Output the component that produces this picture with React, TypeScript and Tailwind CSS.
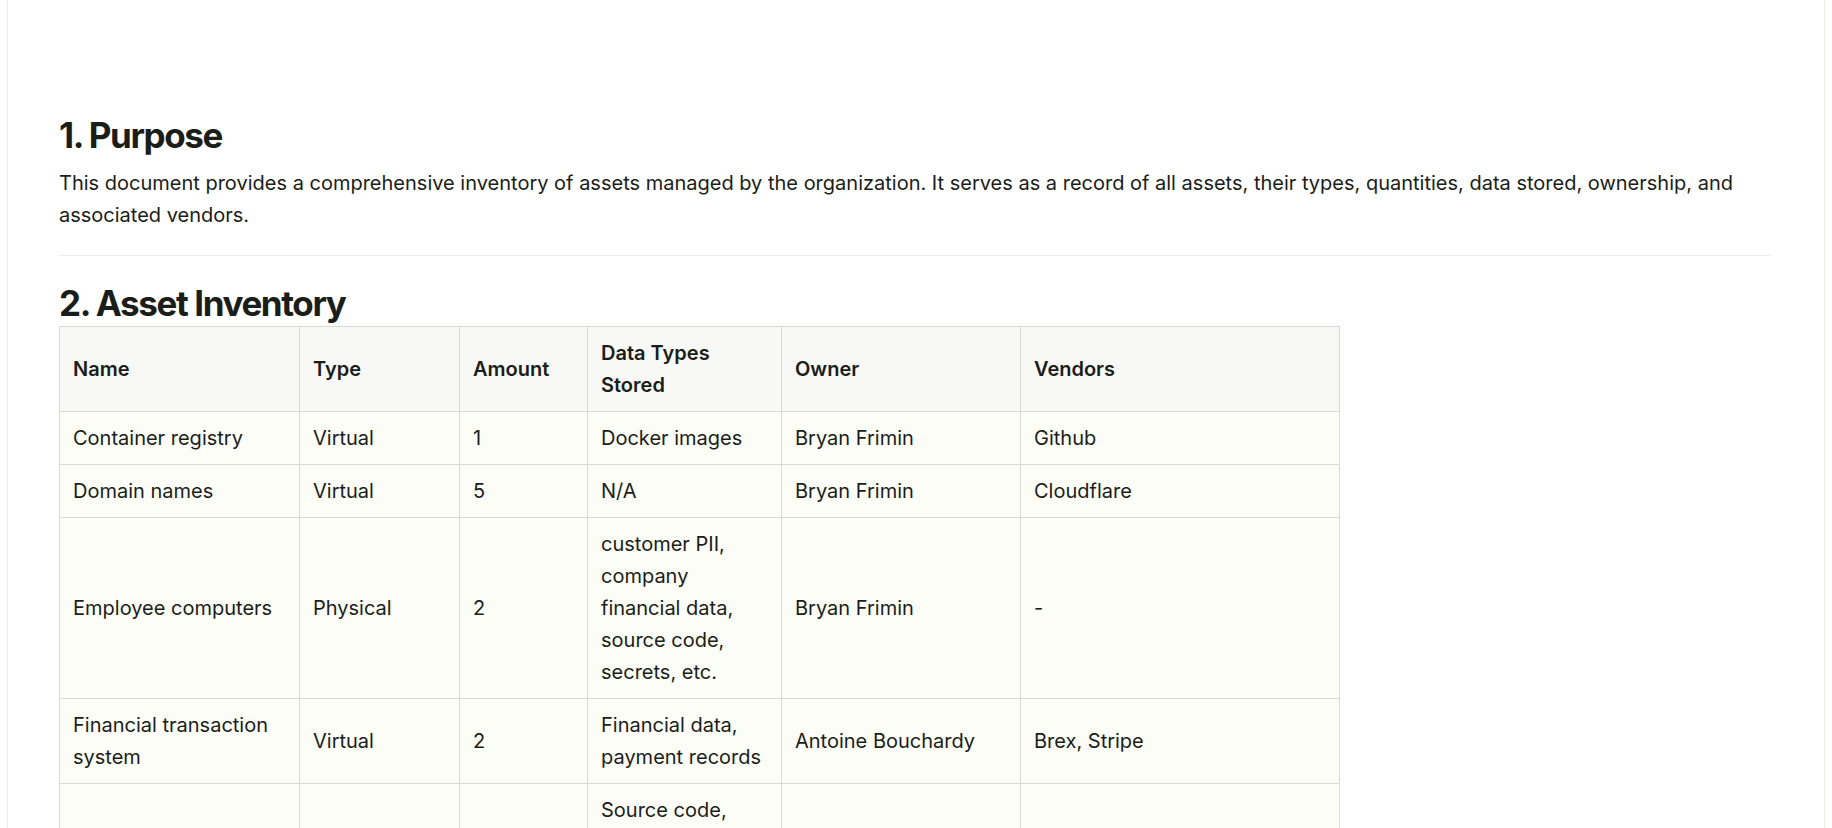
import React from 'react';

const rows = [
  ['Container registry', 'Virtual', '1', 'Docker images', 'Bryan Frimin', 'Github'],
  ['Domain names', 'Virtual', '5', 'N/A', 'Bryan Frimin', 'Cloudflare'],
  ['Employee computers', 'Physical', '2', 'customer PII, company financial data, source code, secrets, etc.', 'Bryan Frimin', '-'],
  ['Financial transaction system', 'Virtual', '2', 'Financial data, payment records', 'Antoine Bouchardy', 'Brex, Stripe'],
  ['Git repositories', 'Virtual', '9', 'Source code, configuration files', 'Bryan Frimin', 'Github'],
];

const widths = ['w-[240px]', 'w-[160px]', 'w-[128px]', 'w-[194px]', 'w-[239px]', 'w-[319px]'];

export default function App() {
  return (
    <div className="min-h-screen bg-white px-[7px] text-[#1a1d18]" style={{ fontFamily: 'Inter, "Noto Sans", sans-serif' }}>
      <div className="border-x border-[#eeeee6] min-h-screen pl-[51px] pr-[53px] pt-[113px]">
        <h1 className="text-[35px] font-bold tracking-[-0.04em] leading-[44px]">1. Purpose</h1>
        <p className="mt-[10px] text-[20px] leading-[32px]">
          This document provides a comprehensive inventory of assets managed by the organization. It serves as a record of all assets, their types, quantities, data stored, ownership, and associated vendors.
        </p>
        <hr className="mt-[24px] border-t border-[#ededed]" />
        <h2 className="mt-[24px] text-[35px] font-bold tracking-[-0.04em] leading-[46px]">2. Asset Inventory</h2>
        <table className="border-collapse text-[20px] leading-[32px]">
          <thead>
            <tr className="bg-[#f8f8f7]">
              {['Name', 'Type', 'Amount', 'Data Types Stored', 'Owner', 'Vendors'].map((h, i) => (
                <th key={h} className={`${widths[i]} border border-[#d9d9d6] px-[13px] py-[10px] text-left font-semibold align-middle`}>{h}</th>
              ))}
            </tr>
          </thead>
          <tbody>
            {rows.map((r) => (
              <tr key={r[0]} className="bg-[#fdfdf8]">
                {r.map((c, i) => (
                  <td key={i} className={`${widths[i]} border border-[#d9d9d6] px-[13px] py-[10px] align-middle`}>{c}</td>
                ))}
              </tr>
            ))}
          </tbody>
        </table>
      </div>
    </div>
  );
}
